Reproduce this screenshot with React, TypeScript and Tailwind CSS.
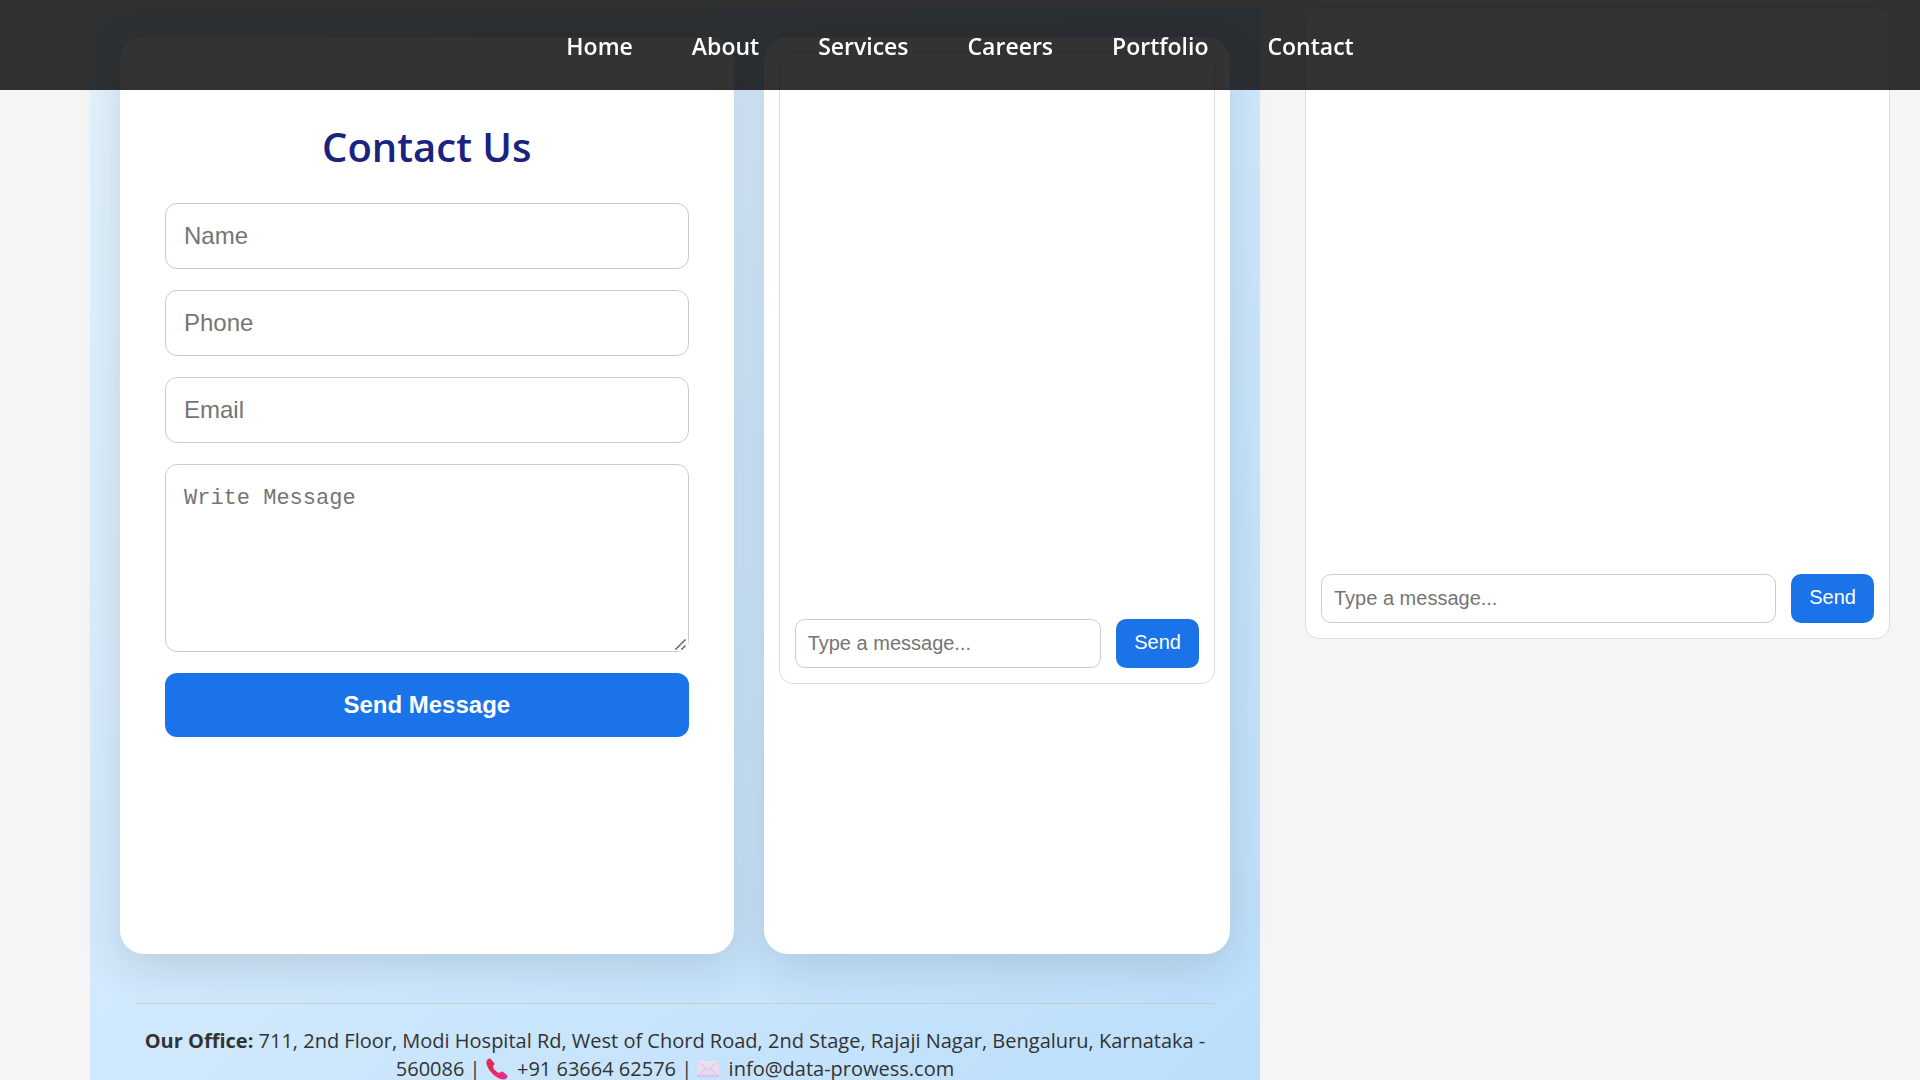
const NAV_LINKS = ["Home", "About", "Services", "Careers", "Portfolio", "Contact"];

const FIELD =
  "block w-full rounded-xl border border-[#cccccc] bg-white p-[18px] text-2xl leading-7 text-black placeholder:text-[#757575] focus:outline-2 focus:outline-[#1a73e8]";

function PhoneIcon() {
  return (
    <svg viewBox="0 0 22 22" className="mr-1 inline-block size-[22px] align-[-4px]" aria-hidden="true">
      <defs>
        <linearGradient id="handset" x1="0" y1="0" x2="1" y2="1">
          <stop offset="0" stopColor="#c93a78" />
          <stop offset="0.3" stopColor="#e9264f" />
          <stop offset="0.7" stopColor="#ee2a78" />
          <stop offset="1" stopColor="#c43aa8" />
        </linearGradient>
      </defs>
      <path
        d="M1.2 1.8 C2.6 0.4 4.2 0.2 5 1.2 L8 4.8 C8.8 5.8 8.6 6.8 7.6 7.6 C6.7 8.4 6.9 9.2 7.6 10.2 C8.9 12.2 10.2 13.5 12.2 14.6 C13 15 13.6 14.9 14.3 14.2 C15.3 13.3 16.2 13.3 17.2 14.1 L20.8 17.1 C21.8 18 21.7 19 20.8 20 C19.2 21.7 16.6 22 13.8 20.8 C8.4 18.5 3.3 13.4 1.2 8 C0.2 5.4 0 3.2 1.2 1.8Z"
        fill="url(#handset)"
      />
    </svg>
  );
}

function EnvelopeIcon() {
  return (
    <svg viewBox="0 0 22 16" className="mr-1 inline-block h-4 w-[22px] align-[-1px]" aria-hidden="true">
      <defs>
        <linearGradient id="paper" x1="0" y1="0" x2="0" y2="1">
          <stop offset="0" stopColor="#e9e2ef" />
          <stop offset="0.8" stopColor="#e9d9ef" />
          <stop offset="1" stopColor="#d9b6ea" />
        </linearGradient>
      </defs>
      <rect width="22" height="16" rx="1" fill="url(#paper)" />
      <path d="M1 1 L11 9 L21 1 M1 15 L8.5 7.5 M21 15 L13.5 7.5" fill="none" stroke="#cdbdd8" strokeWidth="0.8" />
    </svg>
  );
}

function ChatBox() {
  return (
    <section className="rounded-[14px] border border-[#dddddd] bg-white p-[15px]" aria-label="Chat">
      <div className="mb-[15px] min-h-[536px] overflow-y-auto" />
      <form className="flex gap-[15px]" onSubmit={(e) => e.preventDefault()}>
        <input
          type="text"
          aria-label="Type a message"
          placeholder="Type a message..."
          className="min-w-0 flex-1 rounded-[10px] border border-[#cccccc] bg-white p-3 text-xl leading-[23px] placeholder:text-[#757575]"
        />
        <button type="submit" className="rounded-[10px] bg-[#1a73e8] px-[18px] pt-3 pb-[14px] text-xl leading-[23px] text-white">
          Send
        </button>
      </form>
    </section>
  );
}

function ContactForm() {
  return (
    <form
      className="flex flex-col gap-[21px] rounded-3xl bg-white px-[45px] pt-[82px] pb-[217px] shadow-[0_12px_45px_rgba(0,0,0,0.12)]"
      onSubmit={(e) => e.preventDefault()}
    >
      <h2 className="mb-[7px] text-center font-['Open_Sans',sans-serif] text-[40px] leading-[56px] font-semibold text-[#1a237e]">
        Contact Us
      </h2>
      <input type="text" aria-label="Name" placeholder="Name" className={FIELD} />
      <input type="tel" aria-label="Phone" placeholder="Phone" className={FIELD} />
      <input type="email" aria-label="Email" placeholder="Email" className={FIELD} />
      <div className="relative">
        <textarea
          aria-label="Write Message"
          placeholder="Write Message"
          className="block h-[188px] w-full resize rounded-xl border border-[#cccccc] bg-white p-[18px] font-['Liberation_Mono',monospace] text-[22px] leading-8 placeholder:text-[#757575] [&::-webkit-resizer]:bg-white"
        />
        <svg viewBox="0 0 14 14" className="pointer-events-none absolute right-px bottom-px size-[14px]" aria-hidden="true">
          <path d="M1.5 12.5 L11.5 2.5 M7.5 12.5 L11.5 8.5" stroke="#555555" strokeWidth="1.6" strokeDasharray="2 0.4" />
        </svg>
      </div>
      <button type="submit" className="rounded-xl bg-[#1a73e8] p-[18px] text-2xl leading-7 font-bold text-white">
        Send Message
      </button>
    </form>
  );
}

export default function App() {
  return (
    <div className="h-screen overflow-hidden bg-[#f5f5f5] font-['Liberation_Sans',Arial,sans-serif]">
      <nav className="fixed inset-x-0 top-0 z-10 border-b border-[#332a33] bg-black/80 pt-[29px] pb-[26px]">
        <ul className="flex justify-center gap-[59px] font-['Open_Sans',sans-serif] text-[23px] leading-[34px] font-semibold text-white">
          {NAV_LINKS.map((label) => (
            <li key={label}>
              <a href={"#" + label.toLowerCase()}>{label}</a>
            </li>
          ))}
        </ul>
      </nav>

      <main className="grid grid-cols-[2fr_1fr] items-start gap-[45px] pt-[7px] pr-[30px] pl-[90px]">
        <div className="bg-linear-135 from-[#e3f2fd] to-[#bbdefb] p-[30px]">
          <div className="grid grid-cols-[25fr_19fr] gap-[30px]">
            <ContactForm />
            <div className="rounded-3xl bg-white p-[15px] shadow-[0_12px_45px_rgba(0,0,0,0.12)]">
              <ChatBox />
            </div>
          </div>
          <footer className="mx-[15px] mt-[49px] border-t border-[#cccccc] pt-[23px] text-center font-['Open_Sans',sans-serif] text-[20px] leading-7 text-[#333333]">
            <strong>Our Office:</strong> 711, 2nd Floor, Modi Hospital Rd, West of Chord Road, 2nd Stage, Rajaji Nagar,
            Bengaluru, Karnataka - 560086 | <PhoneIcon /> +91 63664 62576 | <EnvelopeIcon /> info@data-prowess.com
          </footer>
        </div>
        <ChatBox />
      </main>
    </div>
  );
}
